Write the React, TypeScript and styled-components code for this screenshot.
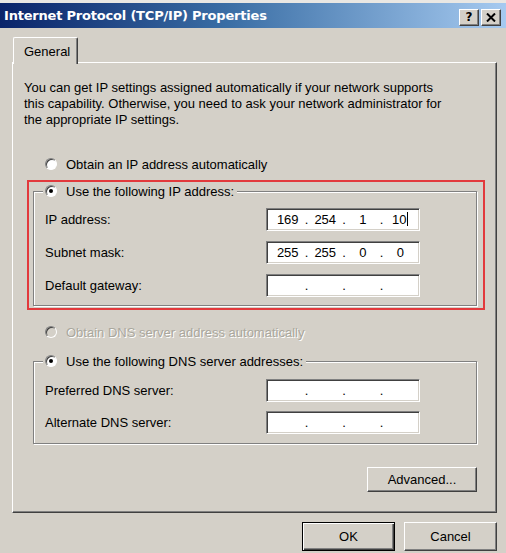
import React from 'react'
import styled, {createGlobalStyle} from "styled-components";

const GlobalStyle = createGlobalStyle`
  html, body {
    margin: 0;
    padding: 0;
    background: #d4d0c8;
  }
  body {
    font-family: "Liberation Sans", Arial, sans-serif;
    font-size: 13px;
    color: #000;
  }
`

const Window = styled.div`
  width: 506px;
  height: 553px;
  box-sizing: border-box;
  border-top: 3px solid #e9e7e3;
  background: #d4d0c8;
  display: flex;
  flex-direction: column;
  overflow: hidden;
`

const TitleBar = styled.div`
  height: 25px;
  flex-shrink: 0;
  display: flex;
  align-items: center;
  padding: 0 5px 0 4px;
  background: linear-gradient(to right, #0a246a, #3a6ea5 45%, #a6caf0);
`

const Title = styled.span`
  flex: 1;
  color: #fff;
  font-family: "DejaVu Sans", Verdana, sans-serif;
  font-weight: bold;
  font-size: 13px;
  letter-spacing: -0.2px;
  white-space: nowrap;
`

const CaptionButtons = styled.div`
  display: flex;
  gap: 2px;
  margin-top: 3px;
`

const CaptionButton = styled.div`
  width: 20px;
  height: 17px;
  box-sizing: border-box;
  background: #d4d0c8;
  border: 1px solid;
  border-color: #fff #404040 #404040 #fff;
  box-shadow: inset -1px -1px 0 #808080;
  display: flex;
  align-items: center;
  justify-content: center;
  font-family: "DejaVu Sans", Verdana, sans-serif;
  font-weight: bold;
  font-size: 12px;
  line-height: 1;
`

const Body = styled.div`
  flex: 1;
  display: flex;
  flex-direction: column;
  padding: 9px 9px 0 12px;
`

const TabStrip = styled.div`
  display: flex;
  height: 26px;
  position: relative;
  z-index: 1;
  margin-bottom: -1px;
`

const Tab = styled.div`
  margin-left: 1px;
  width: 65px;
  box-sizing: border-box;
  height: 27px;
  padding-left: 10px;
  display: flex;
  align-items: center;
  background: #d4d0c8;
  border-top: 1px solid #fff;
  border-left: 1px solid #fff;
  border-right: 1px solid #404040;
  border-radius: 2px 2px 0 0;
  box-shadow: inset -1px 0 0 #808080;
`

const Panel = styled.div`
  width: 485px;
  height: 451px;
  box-sizing: border-box;
  border: 1px solid;
  border-color: #fff #404040 #404040 #fff;
  box-shadow: inset -1px -1px 0 #808080;
  padding: 17px 11px 0 11px;
  display: flex;
  flex-direction: column;
  align-items: flex-start;
`

const Description = styled.p`
  margin: 0;
  line-height: 16px;
  white-space: nowrap;
`

const RadioRow = styled.label<{ $top: number, $disabled?: boolean }>`
  display: flex;
  align-items: center;
  gap: 9px;
  height: 16px;
  margin-top: ${p => p.$top}px;
  margin-left: 21px;
  color: ${p => p.$disabled ? '#aaa79d' : '#000'};
  text-shadow: ${p => p.$disabled ? '1px 1px 0 #fff' : 'none'};
`

const RadioCircle = styled.span<{ $checked?: boolean, $disabled?: boolean }>`
  width: 12px;
  height: 12px;
  box-sizing: border-box;
  border-radius: 50%;
  background: ${p => p.$disabled ? '#d4d0c8' : '#fff'};
  border: 1px solid;
  border-color: #808080 #fff #fff #808080;
  box-shadow: inset 1px 1px 0 #404040;
  display: flex;
  align-items: center;
  justify-content: center;
  flex-shrink: 0;

  &::after {
    content: "";
    width: 4px;
    height: 4px;
    border-radius: 50%;
    background: #000;
    display: ${p => p.$checked ? 'block' : 'none'};
  }
`

const Highlight = styled.div`
  margin-top: 8px;
  margin-left: 3px;
  width: 458px;
  box-sizing: border-box;
  border: 2px solid #e2393c;
  padding: 1px 6px 2px 4px;
`

const GroupBox = styled.fieldset<{ $top?: number, $left?: number, $pt: number, $pb: number }>`
  margin: ${p => p.$top ?? 0}px 0 0 ${p => p.$left ?? 0}px;
  width: 444px;
  box-sizing: border-box;
  min-width: 0;
  padding: ${p => p.$pt}px 11px ${p => p.$pb}px 11px;
  border: 1px solid #808080;
  box-shadow: inset 1px 1px 0 #fff, 1px 1px 0 #fff;
`

const Legend = styled.legend`
  display: flex;
  align-items: center;
  gap: 9px;
  height: 16px;
  padding: 0 3px 0 2px;
  margin-left: -2px;
  background: #d4d0c8;
`

const FieldGrid = styled.div<{ $gap: number }>`
  display: grid;
  grid-template-columns: 221px 154px;
  grid-auto-rows: 23px;
  row-gap: ${p => p.$gap}px;
  align-items: center;
`

const IpBox = styled.div`
  height: 23px;
  box-sizing: border-box;
  background: #fff;
  border: 1px solid;
  border-color: #808080 #fff #fff #808080;
  box-shadow: inset 1px 1px 0 #404040, inset -1px -1px 0 #d4d0c8;
  padding: 0 2px 0 4px;
  display: flex;
  align-items: center;
`

const Octet = styled.span`
  flex: 1;
  text-align: center;
  white-space: nowrap;
`

const Dot = styled.span`
  width: 4px;
  text-align: center;
`

const Caret = styled.span`
  display: inline-block;
  width: 1px;
  height: 14px;
  background: #000;
  vertical-align: -2px;
  margin-left: 1px;
`

const PanelFooter = styled.div`
  margin: 23px 0 0 9px;
  width: 444px;
  display: flex;
  justify-content: flex-end;
`

const Button = styled.button<{ $w: number, $h: number, $default?: boolean }>`
  width: ${p => p.$w}px;
  height: ${p => p.$h}px;
  box-sizing: border-box;
  padding: 0;
  font-family: "Liberation Sans", Arial, sans-serif;
  font-size: 13px;
  color: #000;
  background: #d4d0c8;
  border: 1px solid;
  border-color: ${p => p.$default ? '#000' : '#fff #404040 #404040 #fff'};
  box-shadow: ${p => p.$default
    ? 'inset 1px 1px 0 #fff, inset -1px -1px 0 #404040, inset -2px -2px 0 #808080'
    : 'inset -1px -1px 0 #808080'};
`

const ButtonRow = styled.div`
  display: flex;
  justify-content: flex-end;
  gap: 9px;
  margin-top: 9px;
`

type IpFieldProps = { octets?: string[], caret?: boolean }

const IpField: React.FC<IpFieldProps> = ({octets = ['', '', '', ''], caret}) => (
  <IpBox>
    {octets.map((o, i) => (
      <React.Fragment key={i}>
        {i > 0 && <Dot>.</Dot>}
        <Octet>{o}{caret && i === 3 && <Caret/>}</Octet>
      </React.Fragment>
    ))}
  </IpBox>
)

const CloseGlyph = () => (
  <svg width="10" height="9" viewBox="0 0 10 9">
    <path d="M1 0.5 L9 8.5 M9 0.5 L1 8.5" stroke="#000" strokeWidth="2"/>
  </svg>
)

export default function App() {
  return <>
    <GlobalStyle/>
    <Window>
      <TitleBar>
        <Title>Internet Protocol (TCP/IP) Properties</Title>
        <CaptionButtons>
          <CaptionButton>?</CaptionButton>
          <CaptionButton><CloseGlyph/></CaptionButton>
        </CaptionButtons>
      </TitleBar>
      <Body>
        <TabStrip>
          <Tab>General</Tab>
        </TabStrip>
        <Panel>
          <Description>
            You can get IP settings assigned automatically if your network supports<br/>
            this capability. Otherwise, you need to ask your network administrator for<br/>
            the appropriate IP settings.
          </Description>

          <RadioRow $top={28}>
            <RadioCircle/>
            Obtain an IP address automatically
          </RadioRow>

          <Highlight>
            <GroupBox $pt={9} $pb={8}>
              <Legend>
                <RadioCircle $checked/>
                Use the following IP address:
              </Legend>
              <FieldGrid $gap={10}>
                <span>IP address:</span>
                <IpField octets={['169', '254', '1', '10']} caret/>
                <span>Subnet mask:</span>
                <IpField octets={['255', '255', '0', '0']}/>
                <span>Default gateway:</span>
                <IpField/>
              </FieldGrid>
            </GroupBox>
          </Highlight>

          <RadioRow $top={14} $disabled>
            <RadioCircle $disabled/>
            Obtain DNS server address automatically
          </RadioRow>

          <GroupBox $top={13} $left={9} $pt={10} $pb={9}>
            <Legend>
              <RadioCircle $checked/>
              Use the following DNS server addresses:
            </Legend>
            <FieldGrid $gap={9}>
              <span>Preferred DNS server:</span>
              <IpField/>
              <span>Alternate DNS server:</span>
              <IpField/>
            </FieldGrid>
          </GroupBox>

          <PanelFooter>
            <Button $w={110} $h={25}>Advanced...</Button>
          </PanelFooter>
        </Panel>
        <ButtonRow>
          <Button $w={93} $h={29} $default>OK</Button>
          <Button $w={93} $h={29}>Cancel</Button>
        </ButtonRow>
      </Body>
    </Window>
  </>
}
